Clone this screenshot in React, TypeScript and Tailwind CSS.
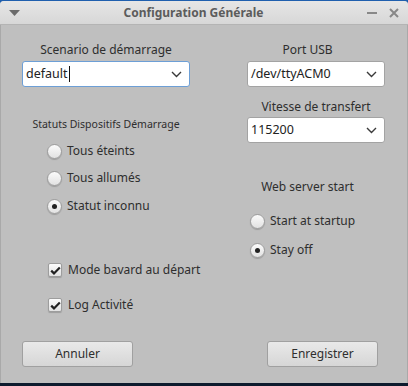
import React, { useState } from 'react';

const font = { fontFamily: '"Noto Sans", "Open Sans", sans-serif' };

const Chevron: React.FC = () => (
  <svg width="11" height="7" viewBox="0 0 11 7" className="shrink-0">
    <polyline points="1,1 5.5,5.5 10,1" fill="none" stroke="#3a3a3a" strokeWidth="1.4" />
  </svg>
);

interface ComboProps {
  value: string;
  focused?: boolean;
  caret?: boolean;
}

const Combo: React.FC<ComboProps> = ({ value, focused, caret }) => (
  <div
    className={`flex h-[26px] items-center justify-between rounded-[3px] border bg-white pl-[3px] pr-[7px] text-[12.5px] text-[#222] ${
      focused ? 'border-[#6d9fd6]' : 'border-[#a3a3a3]'
    }`}
  >
    <span className="flex items-center whitespace-nowrap">
      {value}
      {caret && <span className="ml-[1px] inline-block h-[16px] w-[1px] bg-[#111]" />}
    </span>
    <Chevron />
  </div>
);

const Radio: React.FC<{ label: string; checked: boolean; onClick: () => void }> = ({
  label,
  checked,
  onClick,
}) => (
  <button
    type="button"
    onClick={onClick}
    className="flex h-[20px] w-max items-center gap-[5px] whitespace-nowrap text-[12px] text-[#2e2e2e]"
  >
    <span className="flex h-[15px] w-[15px] items-center justify-center rounded-full border border-[#9d9d9d] bg-gradient-to-b from-[#fbfbfb] to-[#e2e2e2] shadow-[0_1px_1px_rgba(0,0,0,0.18)]">
      {checked && <span className="h-[5px] w-[5px] rounded-full bg-[#222]" />}
    </span>
    {label}
  </button>
);

const Check: React.FC<{ label: string; checked: boolean; onClick: () => void }> = ({
  label,
  checked,
  onClick,
}) => (
  <button
    type="button"
    onClick={onClick}
    className="flex h-[20px] w-max items-center gap-[6px] whitespace-nowrap text-[12px] text-[#2e2e2e]"
  >
    <span className="flex h-[14px] w-[14px] items-center justify-center rounded-[2px] border border-[#9d9d9d] bg-gradient-to-b from-[#fbfbfb] to-[#e2e2e2] shadow-[0_1px_1px_rgba(0,0,0,0.18)]">
      {checked && (
        <svg width="11" height="9" viewBox="0 0 11 9">
          <polyline points="1.2,4.6 4,7.4 9.8,1.4" fill="none" stroke="#222" strokeWidth="2.2" />
        </svg>
      )}
    </span>
    {label}
  </button>
);

const PushButton: React.FC<{ label: string }> = ({ label }) => (
  <button
    type="button"
    className="h-[26px] w-[111px] rounded-[3px] border border-[#a0a0a0] bg-gradient-to-b from-[#e9e9e9] to-[#d6d6d6] text-[12px] text-[#2e2e2e]"
  >
    {label}
  </button>
);

export default function App() {
  const [status, setStatus] = useState('inconnu');
  const [web, setWeb] = useState('off');
  const [verbose, setVerbose] = useState(true);
  const [log, setLog] = useState(true);

  return (
    <div className="h-[386px] w-[408px] overflow-hidden bg-[#1f5fae]" style={font}>
      <div className="mt-[1px] flex h-[382px] flex-col overflow-hidden rounded-t-[4px] bg-[#bfbfbf]">
        {/* title bar */}
        <div className="flex h-[24px] items-center justify-between border-b border-[#b4b4b4] bg-gradient-to-b from-[#e6e6e6] to-[#d7d7d7] px-[9px]">
          <svg width="11" height="6" viewBox="0 0 11 6">
            <polygon points="0,0 11,0 5.5,6" fill="#6b6b6b" />
          </svg>
          <span className="text-[12px] font-bold text-[#5c5c5c]">Configuration Générale</span>
          <div className="flex items-center gap-[12px] text-[#7a7a7a]">
            <span className="block h-[2px] w-[10px] bg-[#888]" />
            <svg width="10" height="10" viewBox="0 0 10 10">
              <path d="M1 1 L9 9 M9 1 L1 9" stroke="#888" strokeWidth="2" />
            </svg>
          </div>
        </div>

        {/* body */}
        <div className="flex flex-1 flex-col border-x border-[#a9a9a9]">
          <div className="flex h-[316px]">
            <div className="ml-[21px] flex w-[168px] flex-col">
              <div className="mt-[15px] h-[20px] whitespace-nowrap text-center text-[12px] leading-[20px] text-[#2e2e2e]">
                Scenario de démarrage
              </div>
              <div className="mt-[1px]">
                <Combo value="default" focused caret />
              </div>
              <div className="mt-[29px] h-[16px] whitespace-nowrap text-center text-[10.5px] leading-[16px] text-[#2e2e2e]">
                Statuts Dispositifs Démarrage
              </div>
              <div className="ml-[25px] mt-[9px] flex flex-col">
                <Radio label="Tous éteints" checked={status === 'eteints'} onClick={() => setStatus('eteints')} />
                <div className="mt-[7px]">
                  <Radio label="Tous allumés" checked={status === 'allumes'} onClick={() => setStatus('allumes')} />
                </div>
                <div className="mt-[8px]">
                  <Radio label="Statut inconnu" checked={status === 'inconnu'} onClick={() => setStatus('inconnu')} />
                </div>
              </div>
              <div className="ml-[26px] mt-[44px] flex flex-col gap-[15px]">
                <Check label="Mode bavard au départ" checked={verbose} onClick={() => setVerbose(!verbose)} />
                <Check label="Log Activité" checked={log} onClick={() => setLog(!log)} />
              </div>
            </div>

            <div className="ml-[57px] flex w-[138px] flex-col">
              <div className="mr-[17px] mt-[15px] h-[20px] text-center text-[12px] leading-[20px] text-[#2e2e2e]">
                Port USB
              </div>
              <div className="mt-[1px]">
                <Combo value="/dev/ttyACM0" />
              </div>
              <div className="mt-[10px] h-[20px] whitespace-nowrap text-center text-[12px] leading-[20px] text-[#2e2e2e]">
                Vitesse de transfert
              </div>
              <Combo value="115200" />
              <div className="mr-[17px] mt-[34px] h-[20px] text-center text-[12px] leading-[20px] text-[#2e2e2e]">
                Web server start
              </div>
              <div className="ml-[3px] mt-[14px] flex flex-col gap-[9px]">
                <Radio label="Start at startup" checked={web === 'start'} onClick={() => setWeb('start')} />
                <Radio label="Stay off" checked={web === 'off'} onClick={() => setWeb('off')} />
              </div>
            </div>
          </div>

          <div className="flex justify-between pl-[21px] pr-[29px]">
            <PushButton label="Annuler" />
            <PushButton label="Enregistrer" />
          </div>
        </div>
      </div>
      <div className="h-[3px] bg-[#0d1b2e]" />
    </div>
  );
}
